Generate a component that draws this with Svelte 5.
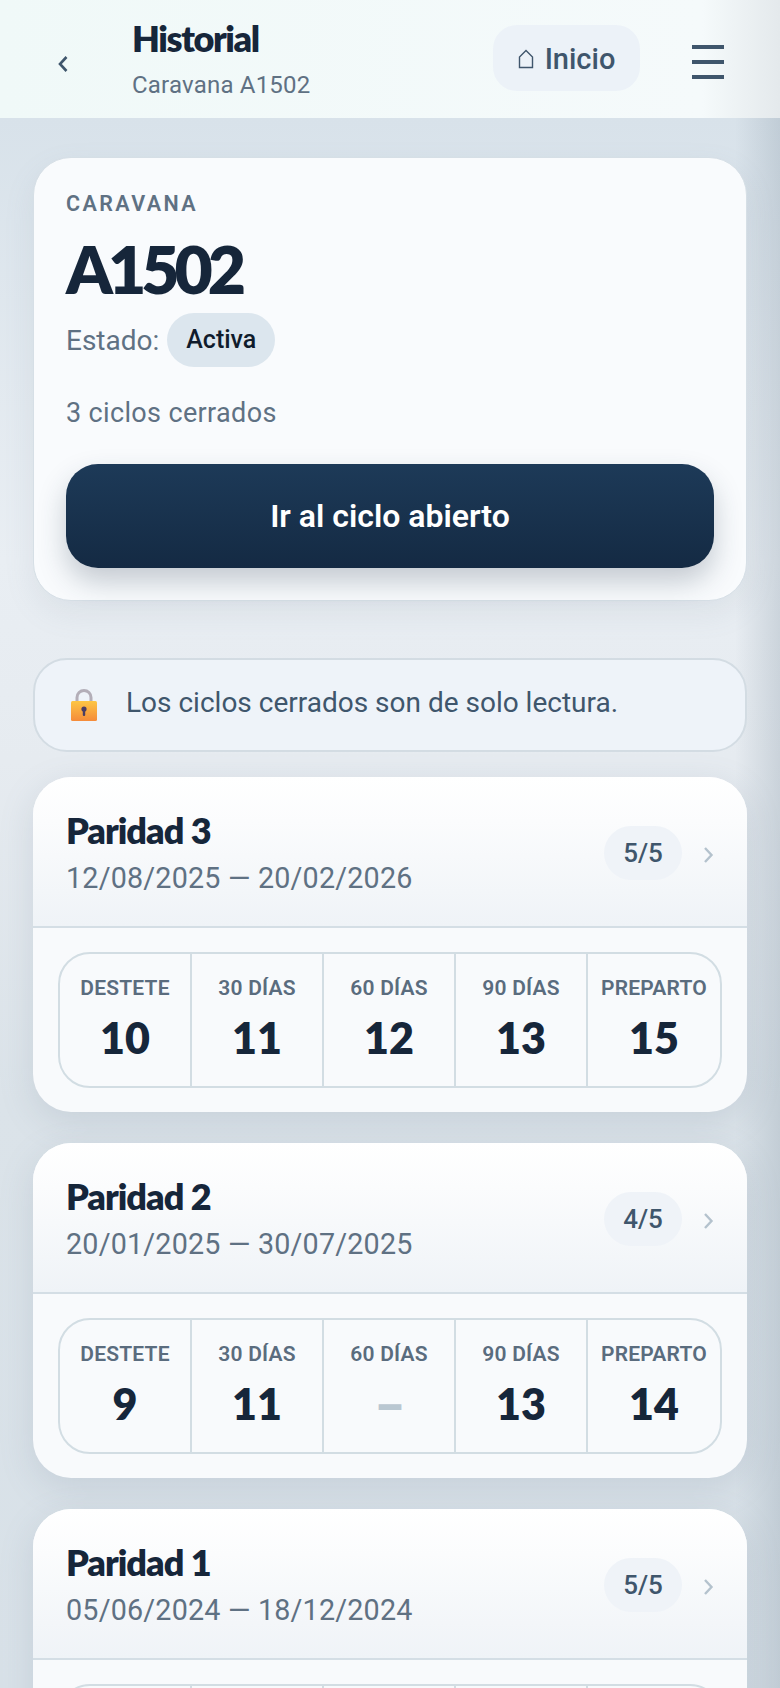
<script>
    // the third card runs off the bottom of the screen, only its empty grid shows
    const cycles = [
        {
            name: 'Paridad 3',
            dates: '12/08/2025 — 20/02/2026',
            done: '5/5',
            values: [['DESTETE', '10'], ['30 DÍAS', '11'], ['60 DÍAS', '12'], ['90 DÍAS', '13'], ['PREPARTO', '15']]
        },
        {
            name: 'Paridad 2',
            dates: '20/01/2025 — 30/07/2025',
            done: '4/5',
            values: [['DESTETE', '9'], ['30 DÍAS', '11'], ['60 DÍAS', null], ['90 DÍAS', '13'], ['PREPARTO', '14']]
        },
        {
            name: 'Paridad 1',
            dates: '05/06/2024 — 18/12/2024',
            done: '5/5',
            values: [['', ''], ['', ''], ['', ''], ['', ''], ['', '']]
        }
    ];
</script>

<div class="page">
    <header class="topbar">
        <button class="back" aria-label="Volver">
            <svg width="12" height="20" viewBox="0 0 12 20"><path d="M9.5 3 L3 10 L9.5 17" fill="none" stroke="#3f566c" stroke-width="2.6" /></svg>
        </button>
        <div class="titles">
            <h1>Historial</h1>
            <p>Caravana A1502</p>
        </div>
        <button class="home">
            <svg width="16" height="20" viewBox="0 0 16 20"><path d="M1.5 18.5 V8 L8 1.5 L14.5 8 V18.5 Z" fill="none" stroke="#3f566c" stroke-width="1.4" /></svg>
            Inicio
        </button>
        <button class="menu" aria-label="Menú">
            <span></span><span></span><span></span>
        </button>
    </header>

    <main>
        <section class="summary">
            <div class="eyebrow">CARAVANA</div>
            <div class="tag">A1502</div>
            <div class="state">Estado: <span class="pill">Activa</span></div>
            <div class="closed">3 ciclos cerrados</div>
            <button class="primary">Ir al ciclo abierto</button>
        </section>

        <div class="notice">
            <svg width="30" height="34" viewBox="0 0 30 34">
                <defs>
                    <linearGradient id="lockBody" x1="0" y1="0" x2="0" y2="1">
                        <stop offset="0" stop-color="#fdc644" />
                        <stop offset="1" stop-color="#f58b3a" />
                    </linearGradient>
                </defs>
                <path d="M8 15 V9.5 a7 7 0 0 1 14 0 V15" fill="none" stroke="#b3aeb8" stroke-width="3" />
                <rect x="2" y="13" width="26" height="20" rx="1.5" fill="url(#lockBody)" />
                <circle cx="15" cy="21" r="2.6" fill="#4a3d63" />
                <rect x="13.8" y="21" width="2.4" height="7" rx="1" fill="#4a3d63" />
            </svg>
            <span>Los ciclos cerrados son de solo lectura.</span>
        </div>

        <div class="cycles">
            {#each cycles as cycle}
                <article class="cycle">
                    <div class="cycle-head">
                        <div>
                            <h2>{cycle.name}</h2>
                            <div class="dates">{cycle.dates}</div>
                        </div>
                        <div class="head-right">
                            <span class="count">{cycle.done}</span>
                            <svg width="12" height="20" viewBox="0 0 12 20"><path d="M3 3 L9.5 10 L3 17" fill="none" stroke="#b4c2cd" stroke-width="2.4" /></svg>
                        </div>
                    </div>
                    <div class="cycle-body">
                        <div class="grid">
                            {#each cycle.values as [label, value]}
                                <div class="cell">
                                    <div class="label">{label}</div>
                                    {#if value === null}
                                        <div class="value empty">–</div>
                                    {:else}
                                        <div class="value">{value}</div>
                                    {/if}
                                </div>
                            {/each}
                        </div>
                    </div>
                </article>
            {/each}
        </div>
    </main>
</div>

<style>
    :global(body) {
        background: #e3e9ef;
    }

    .page {
        height: 1688px;
        overflow: hidden;
        position: relative;
        font-family: "Roboto", "Noto Sans", sans-serif;
        color: #5f7183;
        background:
            linear-gradient(to right, rgba(150, 165, 178, 0) 735px, rgba(150, 165, 178, 0.35) 780px),
            linear-gradient(to bottom, #d8e2ea 118px, #e9eef3 560px, #e6ebf0 760px, #dbe3e9 1100px, #d8e1e8 1688px);
    }

    button {
        border: none;
        background: none;
        font: inherit;
        padding: 0;
    }

    h1, h2, p {
        margin: 0;
    }

    .topbar {
        height: 118px;
        box-sizing: border-box;
        display: flex;
        align-items: center;
        padding: 0 56px 0 57px;
        background: linear-gradient(to right, #f0f9f8 0%, #f5fafb 90%, #e4e9ec 100%);
    }

    .back {
        width: 75px;
        text-align: left;
        display: flex;
        padding-top: 10px;
    }

    .titles {
        flex: 1;
    }

    h1 {
        margin-top: -2px;
        font-family: "Lato", sans-serif;
        font-weight: 800;
        font-size: 36px;
        line-height: 44px;
        letter-spacing: -1.4px;
        color: #16263a;
    }

    .titles p {
        margin-top: 10px;
        font-size: 24px;
        line-height: 30px;
        letter-spacing: 0.2px;
    }

    .home {
        width: 147px;
        height: 66px;
        margin-top: -2px;
        display: flex;
        align-items: center;
        justify-content: center;
        gap: 11px;
        padding-top: 2px;
        border-radius: 24px;
        background: #ecf2f8;
        color: #3f566c;
        font-size: 29px;
        font-weight: 500;
    }

    .menu {
        width: 32px;
        margin-left: 52px;
        display: flex;
        flex-direction: column;
        gap: 11px;
        margin-top: 6px;
    }

    .menu span {
        height: 4px;
        background: #3f566c;
    }

    main {
        padding: 39px 33px 0;
    }

    .summary {
        height: 444px;
        box-sizing: border-box;
        padding: 32px 30px 0 32px;
        border-radius: 38px;
        border: 1px solid #d6dfe6;
        background: #f9fbfd;
        box-shadow: 0 12px 30px rgba(120, 140, 155, 0.12);
    }

    .eyebrow {
        font-size: 21.5px;
        line-height: 28px;
        font-weight: 600;
        letter-spacing: 2.4px;
    }

    .tag {
        margin-top: 12px;
        font-family: "Lato", sans-serif;
        font-size: 66px;
        font-weight: 800;
        line-height: 78px;
        letter-spacing: -5px;
        color: #16263a;
    }

    .state {
        margin-top: 5px;
        display: flex;
        align-items: center;
        gap: 8px;
        font-size: 28px;
    }

    .pill {
        width: 108px;
        height: 54px;
        line-height: 54px;
        text-align: center;
        border-radius: 27px;
        background: #dce6ee;
        color: #101c2c;
        font-size: 25px;
        font-weight: 500;
    }

    .closed {
        margin-top: 29px;
        font-size: 27px;
        line-height: 34px;
        letter-spacing: 0.35px;
    }

    .primary {
        display: block;
        width: 648px;
        height: 104px;
        margin-top: 34px;
        border-radius: 32px;
        background: linear-gradient(to bottom, #1d3a58, #142a43);
        color: #fff;
        font-size: 32px;
        font-weight: 600;
        box-shadow: 0 14px 28px rgba(40, 60, 80, 0.25);
    }

    .notice {
        margin-top: 57px;
        height: 94px;
        box-sizing: border-box;
        display: flex;
        align-items: center;
        gap: 27px;
        padding: 0 0 5px 34px;
        border-radius: 34px;
        border: 2px solid #d3dce3;
        background: #eef3f9;
        color: #3f566c;
        font-size: 28px;
    }

    .notice svg {
        margin-top: 5px;
    }

    .cycles {
        margin-top: 25px;
        display: flex;
        flex-direction: column;
        gap: 31px;
    }

    .cycle {
        height: 335px;
        flex: none;
        border-radius: 38px;
        overflow: hidden;
        background: #f8fafc;
        box-shadow: 0 10px 34px rgba(110, 130, 148, 0.18);
    }

    .cycle-head {
        height: 151px;
        box-sizing: border-box;
        display: flex;
        justify-content: space-between;
        align-items: center;
        padding: 2px 33px 0;
        border-bottom: 2px solid #d4dee5;
        background: linear-gradient(to bottom, #ffffff, #fbfcfd 30%, #eff3f7);
    }

    h2 {
        font-family: "Lato", sans-serif;
        font-size: 36px;
        font-weight: 800;
        line-height: 44px;
        letter-spacing: -1px;
        color: #16263a;
    }

    .dates {
        margin-top: 6px;
        font-size: 28.7px;
        line-height: 40px;
        letter-spacing: 0.2px;
    }

    .head-right {
        display: flex;
        align-items: center;
        gap: 20px;
    }

    .head-right svg {
        margin-top: 4px;
    }

    .count {
        width: 78px;
        height: 54px;
        line-height: 54px;
        text-align: center;
        border-radius: 27px;
        background: #eff3f8;
        color: #3f566c;
        font-size: 26px;
        font-weight: 500;
    }

    .cycle-body {
        padding: 24px 25px 0;
    }

    .grid {
        height: 136px;
        box-sizing: border-box;
        display: grid;
        grid-template-columns: repeat(5, 1fr);
        border: 2px solid #d2dde3;
        border-radius: 32px;
    }

    .cell {
        text-align: center;
        border-right: 2px solid #d2dde3;
    }

    .cell:last-child {
        border-right: none;
    }

    .label {
        margin-top: 21px;
        min-height: 26px;
        font-size: 21px;
        line-height: 26px;
        font-weight: 600;
        letter-spacing: 0.2px;
        color: #5a6c7e;
    }

    .value {
        margin-top: 10px;
        font-family: "Lato", sans-serif;
        font-size: 43px;
        font-weight: 800;
        line-height: 54px;
        color: #16263a;
    }

    .value.empty {
        margin-top: 14px;
        font-family: "Roboto", sans-serif;
        font-size: 44px;
        font-weight: 900;
        color: #b9c7d1;
    }
</style>
